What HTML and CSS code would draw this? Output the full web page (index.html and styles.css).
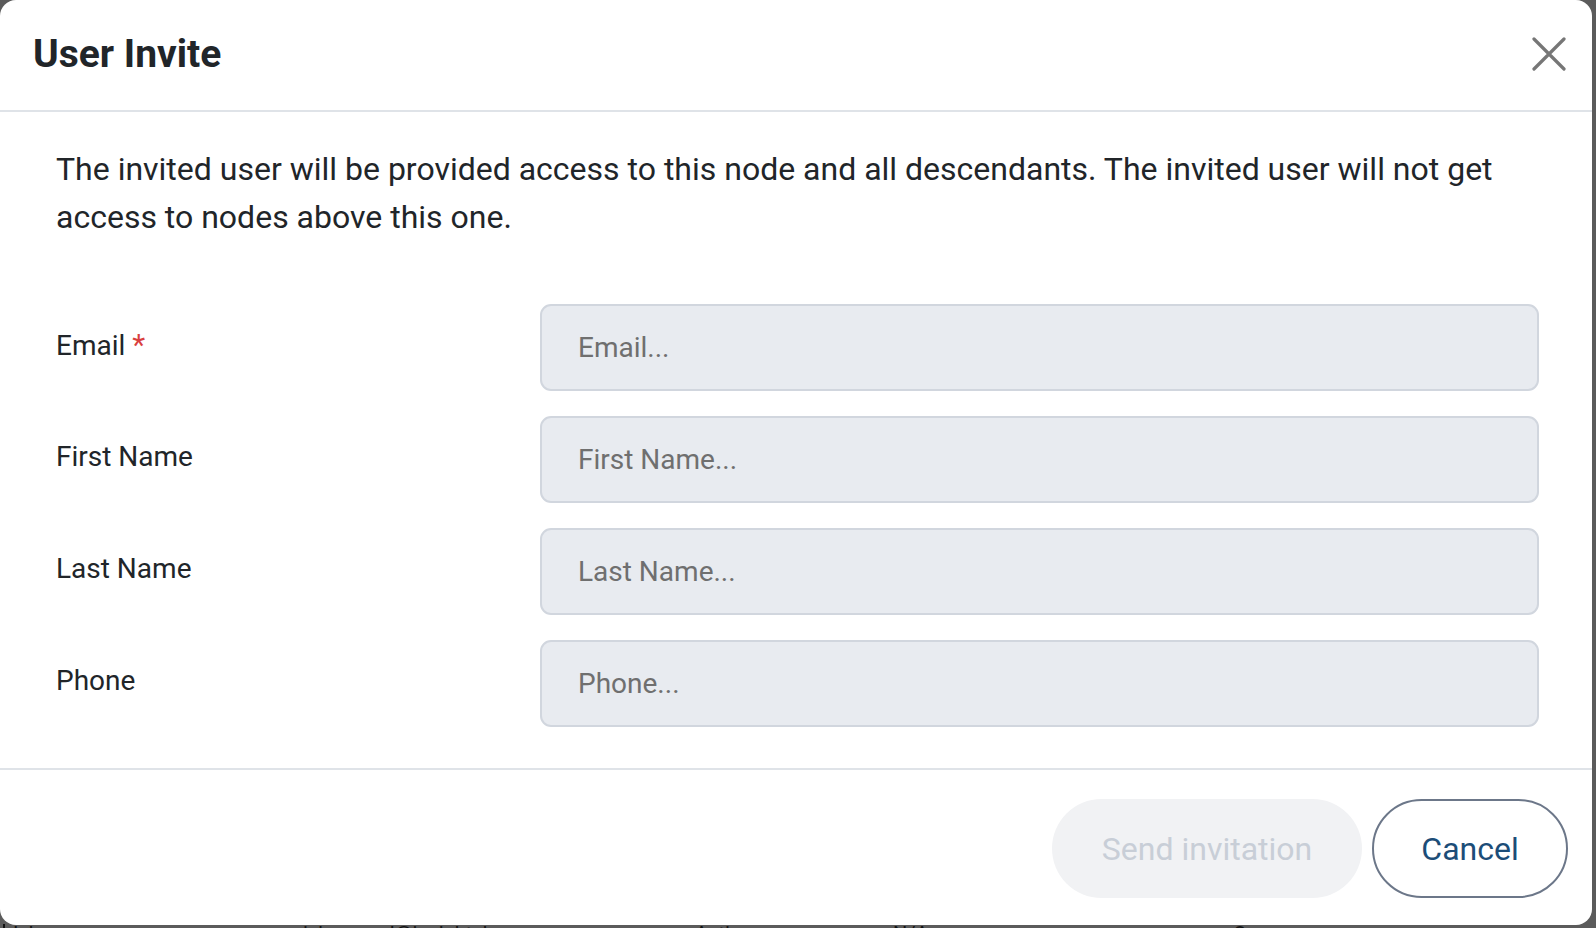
FILE: index.html
```html
<!DOCTYPE html>
<html lang="en">
<head>
<meta charset="utf-8">
<title>User Invite</title>
<link rel="stylesheet" href="styles.css">
</head>
<body>
<div class="dialog">
  <div class="header">
    <h1 class="title">User Invite</h1>
    <button class="close" aria-label="Close">
      <svg width="34" height="34" viewBox="0 0 34 34"><path d="M2 2 L32 32 M32 2 L2 32" stroke="#767676" stroke-width="3.2" stroke-linecap="round" fill="none"/></svg>
    </button>
  </div>
  <div class="body">
    <p class="intro">The invited user will be provided access to this node and all descendants. The invited user will not get access to nodes above this one.</p>
    <div class="form">
      <label class="label">Email <span class="req">*</span></label>
      <input class="field" type="text" placeholder="Email...">
      <label class="label">First Name</label>
      <input class="field" type="text" placeholder="First Name...">
      <label class="label">Last Name</label>
      <input class="field" type="text" placeholder="Last Name...">
      <label class="label">Phone</label>
      <input class="field" type="text" placeholder="Phone...">
    </div>
  </div>
  <div class="footer">
    <button class="btn btn-send" disabled>Send invitation</button>
    <button class="btn btn-cancel">Cancel</button>
  </div>
</div>
<div class="behind">
  <span class="c1">Ishan</span>
  <span class="c2">ishan.goel@insightsbox.com</span>
  <span class="c3"><span class="dot"></span>Active</span>
  <span class="c4">N/A</span>
  <span class="c5">Owner</span>
</div>
</body>
</html>
```

FILE: styles.css
```css
html, body {
  margin: 0;
  padding: 0;
}
body {
  width: 1596px;
  height: 928px;
  overflow: hidden;
  background: #5b5b5b;
  font-family: Roboto, "Liberation Sans", Arial, sans-serif;
  color: #212529;
}
.dialog {
  width: 1592px;
  height: 925px;
  background: #ffffff;
  border-radius: 16px;
  display: flex;
  flex-direction: column;
  box-sizing: border-box;
}
.header {
  height: 112px;
  box-sizing: border-box;
  display: flex;
  align-items: center;
  justify-content: space-between;
  padding: 0 26px 2px 33px;
  border-bottom: 2px solid #dfe3e8;
}
.title {
  margin: 0;
  font-size: 39px;
  line-height: 48px;
  font-weight: 700;
  color: #212529;
}
.close {
  border: 0;
  background: none;
  padding: 0;
  width: 34px;
  height: 34px;
  display: flex;
  cursor: pointer;
}
.body {
  padding: 0 56px;
  flex: 1;
}
.intro {
  margin: 33px 0 0 0;
  font-size: 32px;
  line-height: 48px;
  color: #212529;
}
.form {
  margin-top: 63px;
  display: grid;
  grid-template-columns: 484px 999px;
  grid-auto-rows: 87px;
  row-gap: 25px;
  align-items: center;
}
.label {
  font-size: 28px;
  line-height: 34px;
  color: #212529;
  padding-bottom: 5px;
}
.req {
  color: #d93f3f;
  font-size: 30px;
}
.field {
  height: 87px;
  box-sizing: border-box;
  border: 2px solid #d1d6de;
  border-radius: 11px;
  background: #e8ebf0;
  padding: 0 36px;
  font-family: Roboto, "Liberation Sans", Arial, sans-serif;
  font-size: 28px;
  color: #212529;
  outline: none;
}
.field::placeholder {
  color: #6f6f6f;
}
.footer {
  height: 157px;
  box-sizing: border-box;
  border-top: 2px solid #dfe3e8;
  display: flex;
  justify-content: flex-end;
  align-items: flex-start;
  gap: 10px;
  padding: 29px 24px 0 0;
}
.btn {
  height: 99px;
  border-radius: 50px;
  font-family: Roboto, "Liberation Sans", Arial, sans-serif;
  font-size: 32px;
  box-sizing: border-box;
}
.btn-send {
  width: 310px;
  border: 0;
  background: #f1f2f4;
  color: #c8ced7;
}
.btn-cancel {
  width: 196px;
  border: 2px solid #6c7789;
  background: #ffffff;
  color: #1c4d78;
}
.behind {
  display: flex;
  font-size: 20px;
  line-height: 20px;
  margin-top: -1px;
  color: #111;
  font-family: Roboto, "Liberation Sans", Arial, sans-serif;
  border-left: 2px solid #111;
  margin-left: 3px;
}
.behind span { white-space: nowrap; }
.c1 { width: 290px; padding-left: 8px; }
.c2 { width: 360px; }
.c3 { width: 230px; display: flex; align-items: flex-start; gap: 20px; }
.c4 { width: 340px; }
.dot {
  display: inline-block;
  width: 12px;
  height: 12px;
  border-radius: 50%;
  background: #2f6b3a;
  margin-top: 4px;
}
```
